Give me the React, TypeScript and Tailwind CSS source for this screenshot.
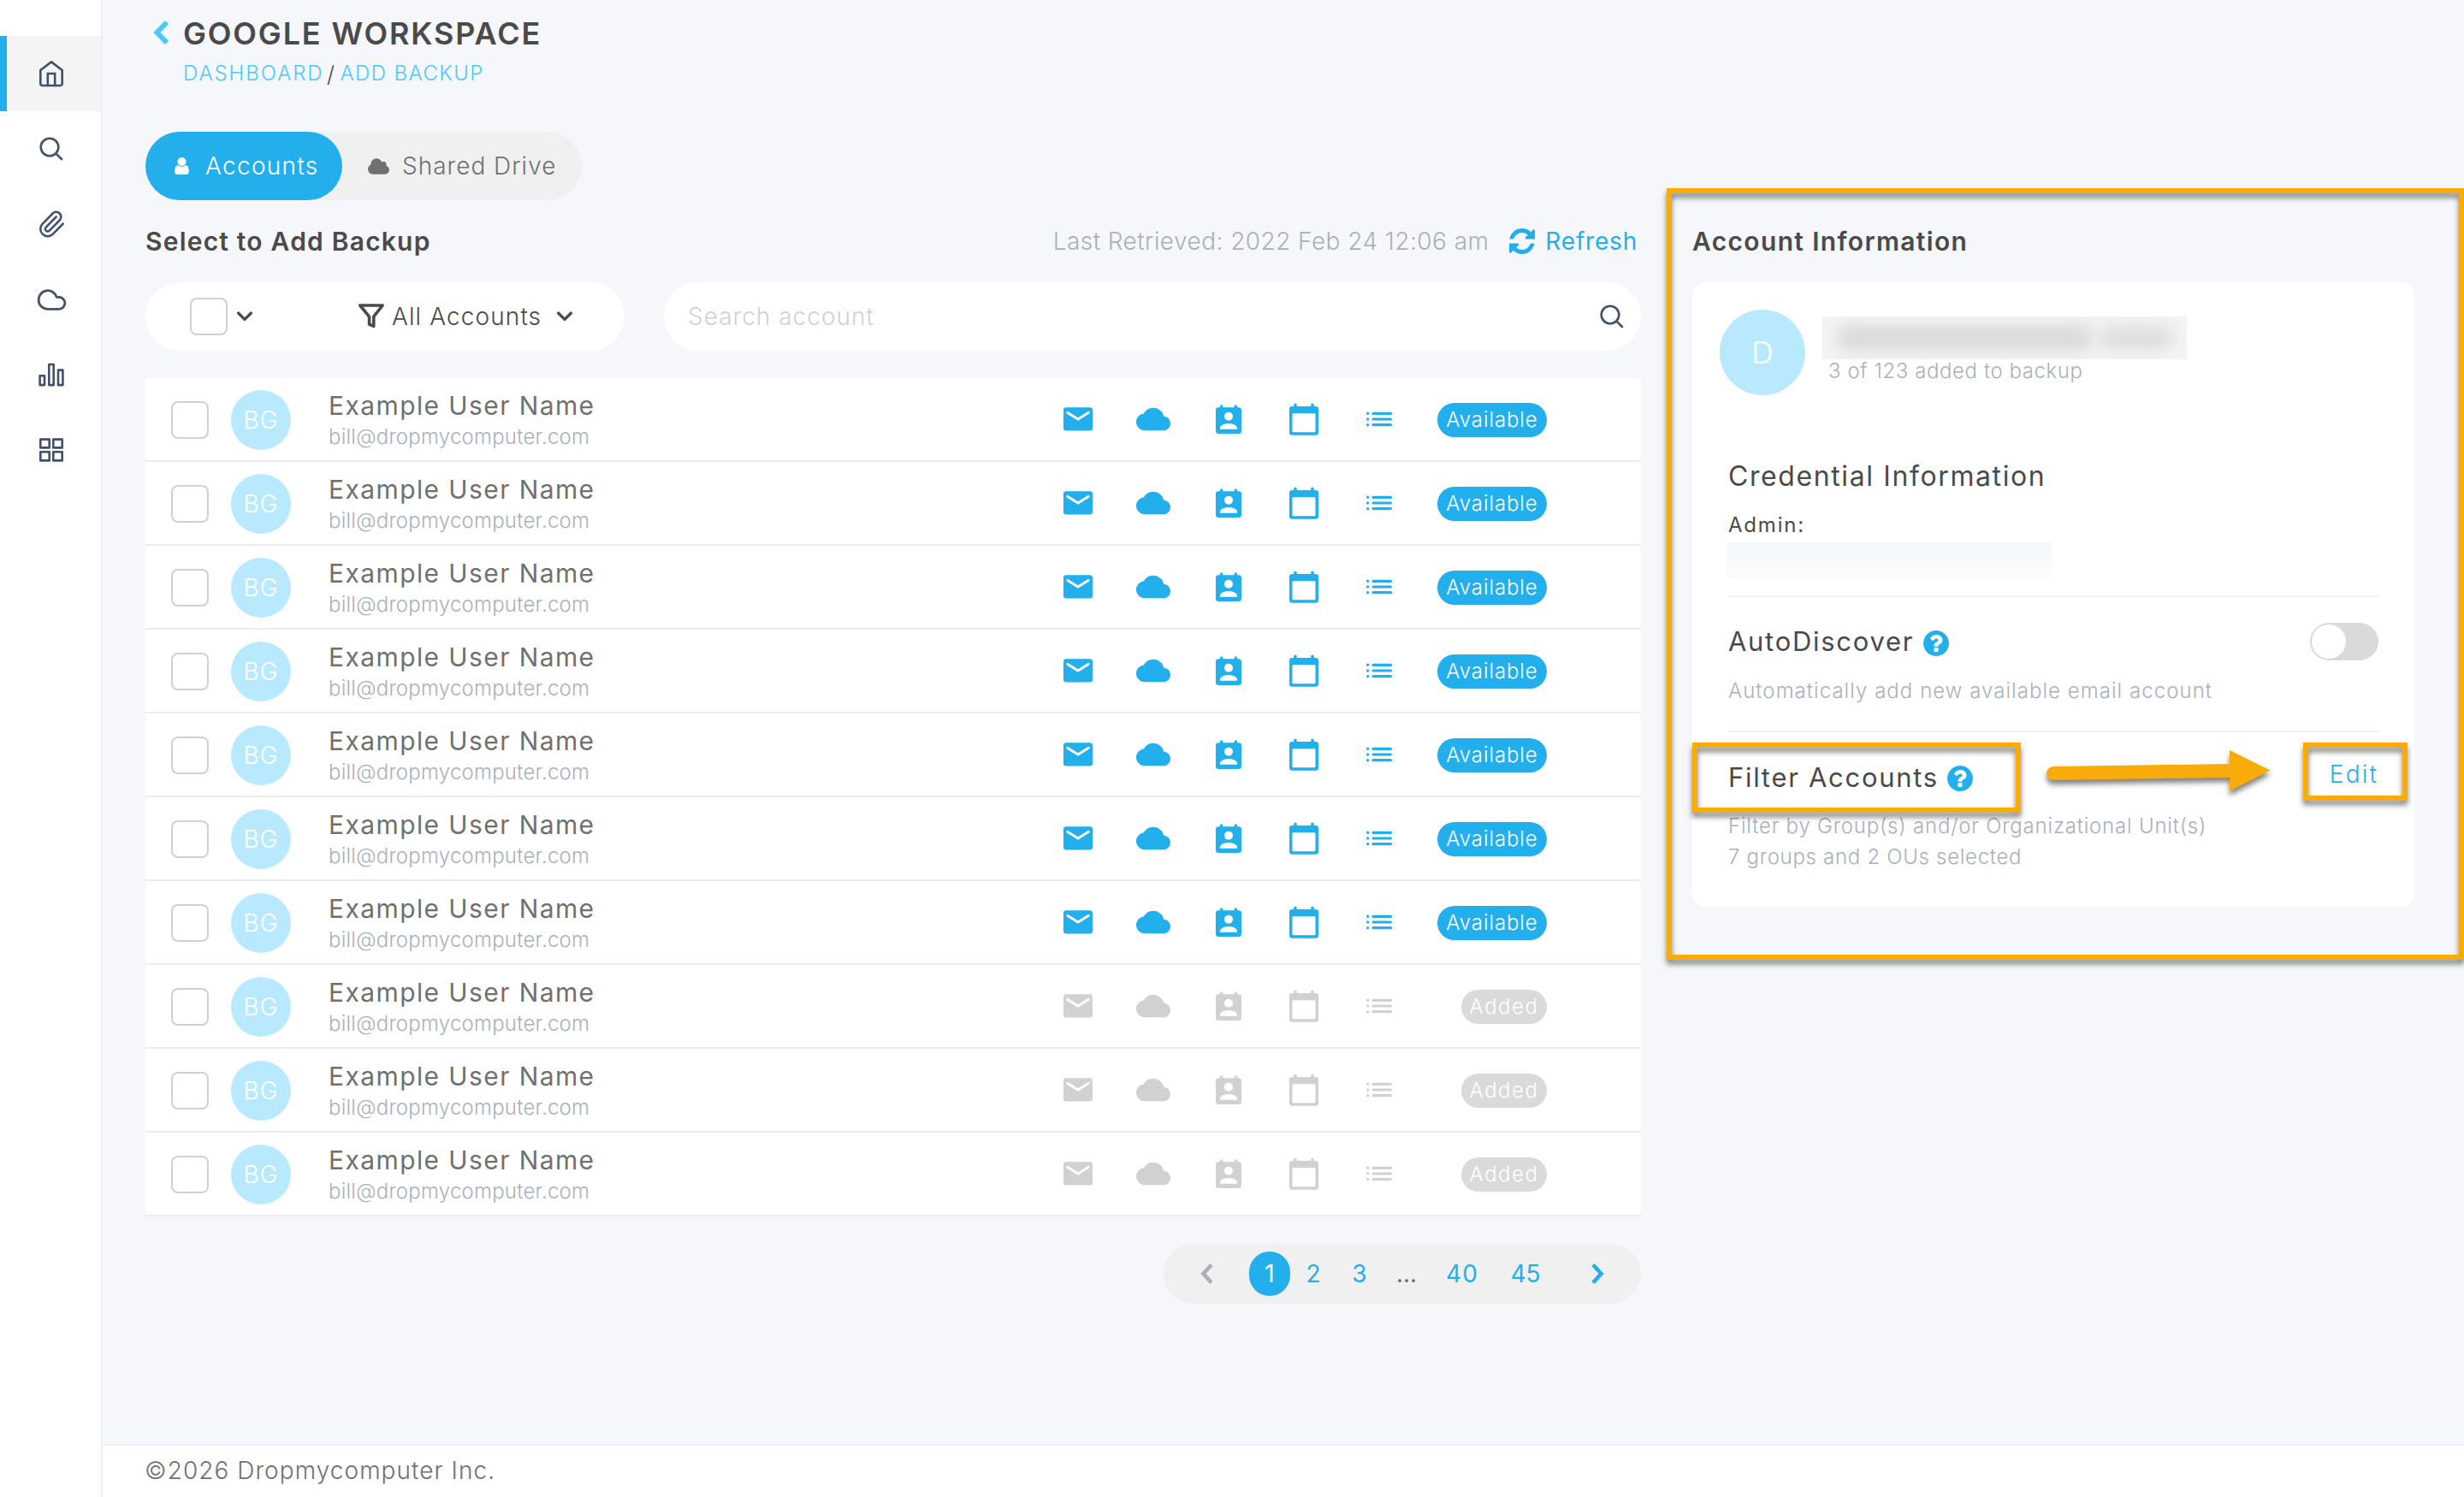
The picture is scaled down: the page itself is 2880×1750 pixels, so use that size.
import React, { useState } from 'react';
import { Cloud, Paperclip } from 'lucide-react';

type AccountStatus = 'AVAILABLE' | 'ADDED';

interface Account {
  id: number;
  initials: string;
  name: string;
  email: string;
  status: AccountStatus;
}

const accounts: Account[] = Array.from({ length: 10 }, (_, i) => ({
  id: i + 1,
  initials: 'BG',
  name: 'Example User Name',
  email: 'bill@dropmycomputer.com',
  status: i < 7 ? 'AVAILABLE' : 'ADDED',
}));

/* ---------- Sidebar icons ---------- */

const navSvg = {
  width: 40,
  height: 40,
  viewBox: '0 0 40 40',
  fill: 'none',
  stroke: 'currentColor',
  strokeWidth: 2.6,
  strokeLinecap: 'round' as const,
  strokeLinejoin: 'round' as const,
};

const HomeIcon = () => (
  <svg {...navSvg}>
    <path d="M7.3 16 20 6.4 32.7 16v15.7a2.3 2.3 0 0 1-2.3 2.3H9.6a2.3 2.3 0 0 1-2.3-2.3z" />
    <path d="M15.8 34V20h8.4v14" strokeLinejoin="miter" />
  </svg>
);

const SearchIcon = () => (
  <svg {...navSvg}>
    <circle cx="18" cy="18" r="10.3" />
    <path d="m25.8 25.8 6.2 6.2" />
  </svg>
);

const ChartIcon = () => (
  <svg {...navSvg}>
    <rect x="6.6" y="21.2" width="5.4" height="10.9" />
    <rect x="17.3" y="8" width="5.4" height="24.1" />
    <rect x="28" y="14.6" width="5.4" height="17.5" />
  </svg>
);

const GridIcon = () => (
  <svg {...navSvg}>
    <rect x="7.3" y="7.6" width="10.4" height="9.8" />
    <rect x="22.3" y="7.6" width="10.4" height="9.8" />
    <rect x="7.3" y="22.2" width="10.4" height="10.2" />
    <rect x="22.3" y="22.2" width="10.4" height="10.2" />
  </svg>
);

/* ---------- Service icons ---------- */

const MailIcon = () => (
  <svg width="40" height="40" viewBox="0 0 40 40" fill="currentColor">
    <rect x="3" y="6.3" width="34" height="27.2" rx="3.3" />
    <path d="M7.9 12.4 20 20l12.1-7.6" fill="none" stroke="#fff" strokeWidth="3" strokeLinecap="round" />
  </svg>
);

const DriveIcon = () => (
  <svg width="40" height="40" viewBox="0 0 24 24" fill="currentColor">
    <path d="M19.35 10.04C18.67 6.59 15.64 4 12 4 9.11 4 6.6 5.64 5.35 8.04 2.34 8.36 0 10.91 0 14c0 3.31 2.69 6 6 6h13c2.76 0 5-2.24 5-5 0-2.64-2.05-4.78-4.65-4.96z" />
  </svg>
);

const ContactIcon = () => (
  <svg width="40" height="40" viewBox="0 0 40 40" fill="currentColor">
    <rect x="5" y="6.3" width="30" height="30.7" rx="3.3" />
    <rect x="10" y="3.2" width="3.3" height="6" rx="1.6" />
    <rect x="26.7" y="3.2" width="3.3" height="6" rx="1.6" />
    <circle cx="20" cy="16.7" r="5" fill="#fff" />
    <path d="M10 31.7v-1.7c0-3.3 6.6-5.1 10-5.1s10 1.8 10 5.1v1.7z" fill="#fff" />
  </svg>
);

const CalendarIcon = () => (
  <svg width="40" height="40" viewBox="0 0 40 40" fill="currentColor">
    <rect x="3" y="5" width="34" height="33.7" rx="3.3" />
    <rect x="8.3" y="1.5" width="3.4" height="6" rx="1.7" />
    <rect x="28.3" y="1.5" width="3.4" height="6" rx="1.7" />
    <rect x="6.5" y="13.2" width="27" height="22" rx="1.3" fill="#fff" />
  </svg>
);

const ListIcon = () => (
  <svg width="40" height="40" viewBox="0 0 40 40" fill="currentColor">
    {[13.3, 20, 26.7].map((y) => (
      <g key={y}>
        <circle cx="6.7" cy={y} r="1.7" />
        <rect x="11.5" y={y - 1.6} width="23.5" height="3.2" rx="1.5" />
      </g>
    ))}
  </svg>
);

/* ---------- Misc icons ---------- */

const UserIcon = () => (
  <svg width="17" height="20" viewBox="0 128 1280 1536" fill="currentColor">
    <path d="M1280 1399q0 109-62.500 187t-150.500 78h-854q-88 0-150.500-78t-62.500-187q0-85 8.500-160.500t31.500-152 58.500-131 94-89 134.500-34.500q131 128 313 128t313-128q76 0 134.500 34.500t94 89 58.500 131 31.500 152 8.500 160.500zm-256-887q0 159-112.500 271.500t-271.500 112.500-271.500-112.500-112.500-271.500 112.500-271.500 271.500-112.500 271.500 112.500 112.500 271.500z" />
  </svg>
);

const SharedCloudIcon = () => (
  <svg width="25" height="19" viewBox="64 128 1920 1408" fill="currentColor">
    <path d="M1984 1152q0 159-112.500 271.500t-271.500 112.500h-1088q-185 0-316.500-131.500t-131.500-316.500q0-132 71-241.500t187-163.500q-2-28-2-43 0-212 150-362t362-150q158 0 286.500 88t187.500 230q70-62 166-62 106 0 181 75t75 181q0 75-41 138 129 30 213 134.500t84 239.500z" />
  </svg>
);

const RefreshIcon = () => (
  <svg width="30" height="30" viewBox="0 0 1536 1536" fill="currentColor">
    <path d="M1511 928q0 5-1 7-64 268-268 434.500t-478 166.500q-146 0-282.500-55t-243.500-157l-129 129q-19 19-45 19t-45-19-19-45v-448q0-26 19-45t45-19h448q26 0 45 19t19 45-19 45l-137 137q71 66 161 102t187 36q134 0 250-65t186-179q11-17 53-117 8-23 30-23h192q13 0 22.500 9.500t9.500 22.500zm25-800v448q0 26-19 45t-45 19h-448q-26 0-45-19t-19-45 19-45l138-138q-148-137-349-137-134 0-250 65t-186 179q-11 17-53 117-8 23-30 23h-199q-13 0-22.500-9.500t-9.500-22.500v-7q65-268 270-434.500t480-166.500q146 0 284 55.500t245 156.500l130-129q19-19 45-19t45 19 19 45z" />
  </svg>
);

const HelpIcon = () => (
  <svg width="30" height="30" viewBox="128 128 1536 1536" className="text-[#23aeec]" fill="currentColor">
    <path d="M1024 1376v-192q0-14-9-23t-23-9h-192q-14 0-23 9t-9 23v192q0 14 9 23t23 9h192q14 0 23-9t9-23zm256-672q0-88-55.500-163t-138.500-116-170-41q-243 0-371 213-15 24 8 42l132 100q7 6 19 6 16 0 25-12 53-68 86-92 34-24 86-24 48 0 85.500 26t37.500 59q0 38-20 61t-68 45q-63 28-115.500 86.500t-52.500 125.500v36q0 14 9 23t23 9h192q14 0 23-9t9-23q0-19 21.500-49.500t54.500-49.500q32-18 49-28.500t46-35 44.500-48 28-60.500 12.500-81zm384 192q0 209-103 385.500t-279.500 279.500-385.500 103-385.500-103-279.500-279.500-103-385.500 103-385.500 279.500-279.500 385.500-103 385.500 103 279.500 279.500 103 385.500z" />
  </svg>
);

const FilterIcon = () => (
  <svg width="32" height="32" viewBox="0 0 32 32" fill="none" stroke="currentColor" strokeWidth="3.6" strokeLinejoin="round">
    <path d="M2.8 3h26.4L18.8 16.2v11.2l-5.2-2.3v-8.9z" />
  </svg>
);

const ChevronDownIcon = () => (
  <svg width="22" height="16" viewBox="0 0 22 16" fill="none" stroke="currentColor" strokeWidth="3.3" strokeLinecap="round" strokeLinejoin="round">
    <path d="m3.6 4 7.4 7.4L18.4 4" />
  </svg>
);

const Checkbox = () => <div className="w-11 h-11 rounded-lg border-2 border-[#d1d1d1] bg-white shrink-0" />;

const navItems = [
  { id: 'home', icon: <HomeIcon /> },
  { id: 'search', icon: <SearchIcon /> },
  { id: 'attachments', icon: <Paperclip size={34} strokeWidth={1.8} /> },
  { id: 'cloud', icon: <Cloud size={37} strokeWidth={1.8} /> },
  { id: 'reports', icon: <ChartIcon /> },
  { id: 'apps', icon: <GridIcon /> },
];

const services = [
  { id: 'mail', icon: <MailIcon /> },
  { id: 'drive', icon: <DriveIcon /> },
  { id: 'contacts', icon: <ContactIcon /> },
  { id: 'calendar', icon: <CalendarIcon /> },
  { id: 'tasks', icon: <ListIcon /> },
];

const Sidebar: React.FC = () => {
  const [active, setActive] = useState('home');

  return (
    <aside className="w-[120px] shrink-0 bg-white border-r-2 border-[#eeeff5] pt-[42px]">
      {navItems.map((item) => (
        <button
          key={item.id}
          onClick={() => setActive(item.id)}
          className={`w-full h-[88px] flex items-center justify-center text-[#42506b] border-l-8 pr-[6px] ${
            active === item.id ? 'bg-[#f4f4f4] border-[#23aeec]' : 'bg-white border-white'
          }`}
        >
          {item.icon}
        </button>
      ))}
    </aside>
  );
};

const AccountRow: React.FC<{ account: Account }> = ({ account }) => {
  const available = account.status === 'AVAILABLE';

  return (
    <div className="h-[98px] pt-[2px] pl-[30px] pr-[110px] flex items-center bg-white border-b-2 border-[#ececec]">
      <Checkbox />
      <div className="w-[70px] h-[70px] ml-[26px] rounded-full bg-[#b9e9ff] text-white text-[28px] font-light tracking-[1px] flex items-center justify-center shrink-0">
        {account.initials}
      </div>
      <div className="ml-11">
        <p className="text-[30px] leading-9 tracking-[1.4px] text-[#707070]">{account.name}</p>
        <p className="mt-[3px] text-[24px] leading-8 tracking-[0.23px] font-light text-[#a9b0bd]">{account.email}</p>
      </div>
      <div className={`ml-auto mb-[2px] flex ${available ? 'text-[#23aeec]' : 'text-[#d1d1d1]'}`}>
        {services.map((service) => (
          <span key={service.id} className="w-[88px] flex justify-center">{service.icon}</span>
        ))}
      </div>
      <div className="w-[152px] flex justify-end">
        {available ? (
          <span className="w-32 h-10 rounded-full bg-[#23aeec] text-white text-[24px] font-light tracking-[0.9px] flex items-center justify-center">
            Available
          </span>
        ) : (
          <span className="w-[100px] h-10 rounded-full bg-[#dadada] text-white text-[24px] font-light tracking-[1.5px] flex items-center justify-center">
            Added
          </span>
        )}
      </div>
    </div>
  );
};

const Pagination: React.FC = () => (
  <div className="self-end mt-8 w-[558px] h-[70px] rounded-full bg-[#f0f0f0] flex items-center text-[28px] text-[#23aeec]">
    <svg className="ml-[42px] text-[#a9b0bd]" width="18" height="26" viewBox="0 0 18 26" fill="none" stroke="currentColor" strokeWidth="4.6">
      <path d="m14 2.5-9.5 10.5 9.5 10.5" />
    </svg>
    <span className="ml-10 w-12 h-[52px] rounded-full bg-[#23aeec] text-white flex items-center justify-center">1</span>
    <span className="w-[54px] text-center">2</span>
    <span className="w-[54px] text-center">3</span>
    <span className="w-[56px] text-center text-[#707070]">...</span>
    <span className="w-[74px] text-center tracking-[1px]">40</span>
    <span className="w-[74px] text-center">45</span>
    <svg className="ml-[39px]" width="18" height="26" viewBox="0 0 18 26" fill="none" stroke="currentColor" strokeWidth="4.6">
      <path d="m3 2.5 9.5 10.5-9.5 10.5" />
    </svg>
  </div>
);

const AccountInformation: React.FC = () => (
  <section className="relative w-[844px]">
    <h2 className="h-24 flex items-center text-[30px] font-semibold tracking-[1.34px] text-[#4a4a4a]">Account Information</h2>

    <div className="relative h-[730px] bg-white rounded-[14px]">
      <div className="pt-8 pl-8 flex">
        <div className="w-[100px] h-[100px] rounded-full bg-[#b9e9ff] text-white text-[36px] font-light flex items-center justify-center">D</div>
        <div className="ml-5 pt-2">
          {/* Domain hidden on purpose */}
          <div className="w-[426px] h-[50px] bg-[#f4f4f4] overflow-hidden flex items-center justify-center gap-2">
            <div className="w-[300px] h-[30px] rounded-full bg-[#d9d9d9] blur-[9px]" />
            <div className="w-[86px] h-[26px] rounded-full bg-[#dcdcdc] blur-[9px]" />
          </div>
          <p className="pl-[7px] text-[24px] leading-7 tracking-[0.58px] font-light text-[#a9b0bd]">3 of 123 added to backup</p>
        </div>
      </div>

      <div className="px-[42px]">
        <h3 className="mt-[75px] text-[32px] leading-10 tracking-[1.6px] text-[#4a4a4a]">Credential Information</h3>
        <p className="mt-[21px] text-[24px] leading-8 tracking-[1.8px] text-[#4a4a4a]">Admin:</p>
        <div className="mt-1 -ml-[2px] w-[380px] h-[42px] bg-linear-to-b from-[#f5f6f7] to-[#fbfcfc]" />

        <div className="mt-5 border-t-2 border-[#f1f1f1] pt-[30px]">
          <div className="h-11 flex items-center">
            <h3 className="text-[31px] tracking-[1.7px] text-[#4a4a4a]">AutoDiscover</h3>
            <span className="ml-[11px] mt-1"><HelpIcon /></span>
            <div className="ml-auto w-20 h-11 p-[2px] rounded-full bg-[#dadada]">
              <div className="w-10 h-10 rounded-full bg-white" />
            </div>
          </div>
          <p className="mt-[18px] text-[24px] leading-9 tracking-[1.04px] font-light text-[#a9b0bd]">
            Automatically add new available email account
          </p>
        </div>

        <div className="mt-7 border-t-2 border-[#f1f1f1] pt-[31px]">
          <div className="h-11 flex items-center">
            <h3 className="text-[31px] tracking-[1.7px] text-[#4a4a4a]">Filter Accounts</h3>
            <span className="ml-[10px] mt-[2px]"><HelpIcon /></span>
            <button className="ml-auto mb-[9px] text-[28px] font-light tracking-[2.2px] text-[#23aeec]">Edit</button>
          </div>
          <div className="mt-[17px] text-[24px] leading-9 font-light text-[#a9b0bd]">
            <p className="tracking-[0.8px]">Filter by Group(s) and/or Organizational Unit(s)</p>
            <p className="tracking-[0.7px]">7 groups and 2 OUs selected</p>
          </div>
        </div>
      </div>

      {/* Callouts */}
      <div className="absolute left-0 top-[538px] w-[384px] h-[82px] border-[6px] border-[#f8ab09] drop-shadow-[0_5px_3px_rgba(0,0,0,0.5)]" />
      <div className="absolute left-[714px] top-[538px] w-[122px] h-[68px] border-[6px] border-[#f8ab09] drop-shadow-[0_5px_3px_rgba(0,0,0,0.5)]" />
      <svg className="absolute left-[402px] top-[530px] drop-shadow-[0_5px_3px_rgba(0,0,0,0.5)]" width="290" height="80" viewBox="0 0 290 80" fill="#f8ab09">
        <path d="M20 44 230 41" stroke="#f8ab09" strokeWidth="16" strokeLinecap="round" />
        <path d="m226 17 47.5 23.5L226 65z" />
      </svg>
    </div>

    <div className="absolute -left-[30px] -top-[14px] w-[932px] h-[902px] border-[6px] border-[#f8ab09] drop-shadow-[0_5px_3px_rgba(0,0,0,0.5)]" />
  </section>
);

const App: React.FC = () => (
  <div className="w-[2880px] h-[1750px] flex overflow-hidden bg-[#f6f7fb] font-[Inter,sans-serif]">
    <Sidebar />

    <div className="flex-1 flex flex-col">
      <main className="flex-1 pl-[50px]">
        <header className="h-[154px] pt-[15px]">
          <div className="h-12 flex items-center">
            <svg className="ml-[8px] mb-[2px] text-[#4dc8ff]" width="22" height="30" viewBox="0 0 22 30" fill="none" stroke="currentColor" strokeWidth="6">
              <path d="M17 3 5.5 15 17 27" />
            </svg>
            <h1 className="ml-[14px] text-[36px] font-semibold tracking-[1.85px] text-[#4a4a4a]">GOOGLE WORKSPACE</h1>
          </div>
          <nav className="mt-[7px] ml-[44px] h-8 flex items-center text-[24px] font-light text-[#4dc8ff]">
            <span className="tracking-[1.9px]">DASHBOARD</span>
            <span className="w-[16px] text-center text-[26px] text-[#4a4a4a]">/</span>
            <span className="ml-[3px] tracking-[1.4px]">ADD BACKUP</span>
          </nav>
        </header>

        <div className="w-[510px] h-20 rounded-full bg-[#f0f0f0] flex text-[28px] font-light">
          <button className="w-[230px] rounded-full bg-[#23aeec] text-white flex items-center pl-[34px]">
            <UserIcon />
            <span className="ml-[19px] tracking-[1.3px]">Accounts</span>
          </button>
          <button className="flex items-center pl-[30px] text-[#707070]">
            <SharedCloudIcon />
            <span className="ml-[15px] tracking-[1px]">Shared Drive</span>
          </button>
        </div>

        <div className="flex gap-[60px]">
          <section className="w-[1748px] flex flex-col">
            <div className="h-24 flex items-center text-[28px]">
              <h2 className="text-[30px] font-semibold tracking-[1.2px] text-[#4a4a4a]">Select to Add Backup</h2>
              <span className="ml-auto font-light tracking-[0.45px] text-[#a9b0bd]">Last Retrieved: 2022 Feb 24 12:06 am</span>
              <button className="ml-[24px] mr-[4px] flex items-center text-[#23aeec]">
                <RefreshIcon />
                <span className="ml-[12px] tracking-[0.8px]">Refresh</span>
              </button>
            </div>

            <div className="flex gap-[46px] text-[28px] font-light">
              <div className="w-[560px] h-20 rounded-full bg-white flex items-center pl-[52px] text-[#4a4a4a]">
                <Checkbox />
                <span className="ml-[9px]"><ChevronDownIcon /></span>
                <span className="ml-[121px]"><FilterIcon /></span>
                <span className="ml-[8px] tracking-[1.1px]">All Accounts</span>
                <span className="ml-[16px]"><ChevronDownIcon /></span>
              </div>
              <div className="flex-1 h-20 rounded-full bg-white flex items-center pl-7 pr-[14px]">
                <span className="tracking-[1px] text-[#d1d1d1]">Search account</span>
                <span className="ml-auto text-[#42506b]"><SearchIcon /></span>
              </div>
            </div>

            <div className="mt-8">
              {accounts.map((account) => (
                <AccountRow key={account.id} account={account} />
              ))}
            </div>

            <Pagination />
          </section>

          <AccountInformation />
        </div>
      </main>

      <footer className="h-[62px] shrink-0 bg-white border-t-2 border-[#eeeff5] pl-[49px] pb-[3px] flex items-center text-[28px] font-light tracking-[1.05px] text-[#707070]">
        ©2026 Dropmycomputer Inc.
      </footer>
    </div>
  </div>
);

export default App;
